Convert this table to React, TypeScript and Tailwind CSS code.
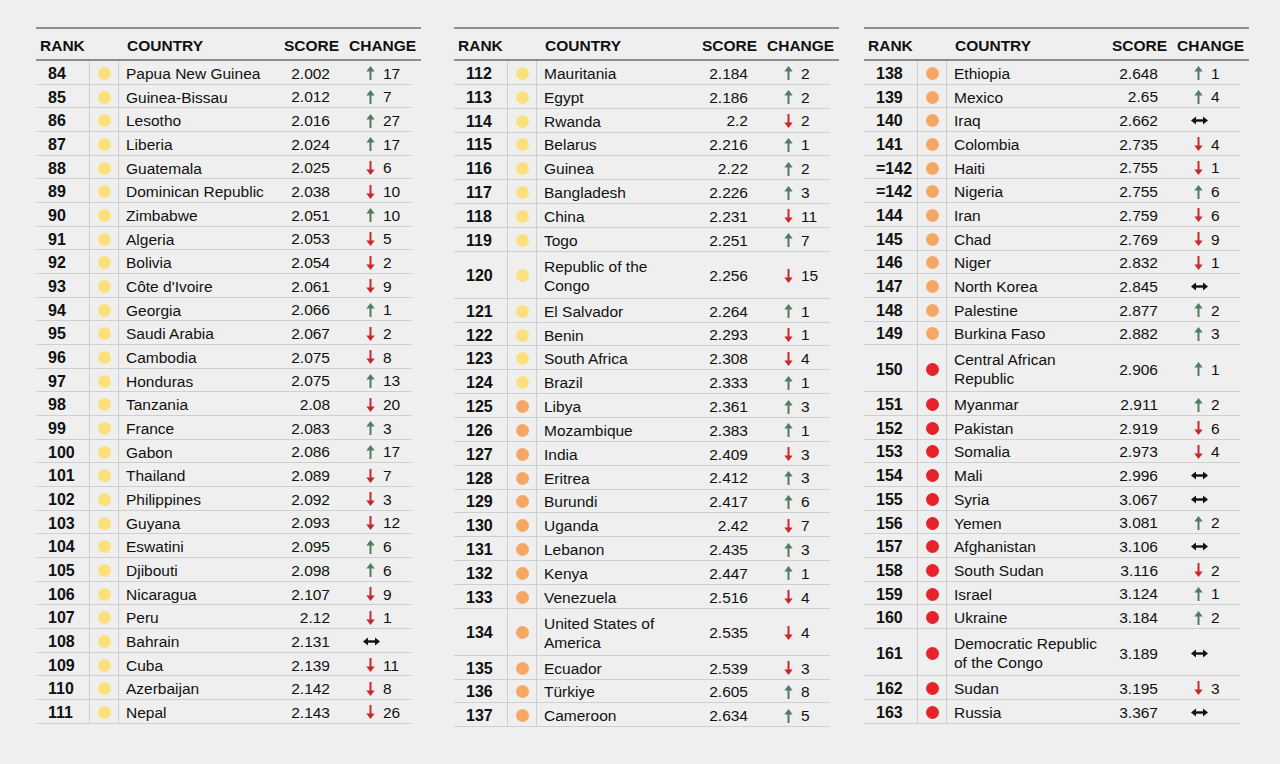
import React from "react";

type Dir = "up" | "down" | "same";
type Row = { r: string; c: string[]; s: string; d: Dir; n?: string; col: "y" | "o" | "r" };

const parse = (txt: string, colFn: (i: number) => "y" | "o" | "r"): Row[] =>
  txt
    .trim()
    .split("\n")
    .map((line, i) => {
      const [r, c, s, d, n] = line.split("|");
      return { r, c: c.split("/"), s, d: d as Dir, n, col: colFn(i) };
    });

const T1 = parse(
  `84|Papua New Guinea|2.002|up|17
85|Guinea-Bissau|2.012|up|7
86|Lesotho|2.016|up|27
87|Liberia|2.024|up|17
88|Guatemala|2.025|down|6
89|Dominican Republic|2.038|down|10
90|Zimbabwe|2.051|up|10
91|Algeria|2.053|down|5
92|Bolivia|2.054|down|2
93|Côte d'Ivoire|2.061|down|9
94|Georgia|2.066|up|1
95|Saudi Arabia|2.067|down|2
96|Cambodia|2.075|down|8
97|Honduras|2.075|up|13
98|Tanzania|2.08|down|20
99|France|2.083|up|3
100|Gabon|2.086|up|17
101|Thailand|2.089|down|7
102|Philippines|2.092|down|3
103|Guyana|2.093|down|12
104|Eswatini|2.095|up|6
105|Djibouti|2.098|up|6
106|Nicaragua|2.107|down|9
107|Peru|2.12|down|1
108|Bahrain|2.131|same|
109|Cuba|2.139|down|11
110|Azerbaijan|2.142|down|8
111|Nepal|2.143|down|26`,
  () => "y"
);

const T2 = parse(
  `112|Mauritania|2.184|up|2
113|Egypt|2.186|up|2
114|Rwanda|2.2|down|2
115|Belarus|2.216|up|1
116|Guinea|2.22|up|2
117|Bangladesh|2.226|up|3
118|China|2.231|down|11
119|Togo|2.251|up|7
120|Republic of the/Congo|2.256|down|15
121|El Salvador|2.264|up|1
122|Benin|2.293|down|1
123|South Africa|2.308|down|4
124|Brazil|2.333|up|1
125|Libya|2.361|up|3
126|Mozambique|2.383|up|1
127|India|2.409|down|3
128|Eritrea|2.412|up|3
129|Burundi|2.417|up|6
130|Uganda|2.42|down|7
131|Lebanon|2.435|up|3
132|Kenya|2.447|up|1
133|Venezuela|2.516|down|4
134|United States of/America|2.535|down|4
135|Ecuador|2.539|down|3
136|Türkiye|2.605|up|8
137|Cameroon|2.634|up|5`,
  (i) => (i < 13 ? "y" : "o")
);

const T3 = parse(
  `138|Ethiopia|2.648|up|1
139|Mexico|2.65|up|4
140|Iraq|2.662|same|
141|Colombia|2.735|down|4
=142|Haiti|2.755|down|1
=142|Nigeria|2.755|up|6
144|Iran|2.759|down|6
145|Chad|2.769|down|9
146|Niger|2.832|down|1
147|North Korea|2.845|same|
148|Palestine|2.877|up|2
149|Burkina Faso|2.882|up|3
150|Central African/Republic|2.906|up|1
151|Myanmar|2.911|up|2
152|Pakistan|2.919|down|6
153|Somalia|2.973|down|4
154|Mali|2.996|same|
155|Syria|3.067|same|
156|Yemen|3.081|up|2
157|Afghanistan|3.106|same|
158|South Sudan|3.116|down|2
159|Israel|3.124|up|1
160|Ukraine|3.184|up|2
161|Democratic Republic/of the Congo|3.189|same|
162|Sudan|3.195|down|3
163|Russia|3.367|same|`,
  (i) => (i < 12 ? "o" : "r")
);

const dotClass = { y: "bg-[#fbe07e]", o: "bg-[#f5a863]", r: "bg-[#e6232a]" };

function Arrow({ d }: { d: Dir }) {
  if (d === "same")
    return (
      <svg width="17" height="9" viewBox="0 0 17 9" className="block">
        <path d="M4 4.5 H13" stroke="#111" strokeWidth="2.4" />
        <path d="M0 4.5 L5 0.5 L5 8.5 Z" fill="#111" />
        <path d="M17 4.5 L12 0.5 L12 8.5 Z" fill="#111" />
      </svg>
    );
  if (d === "up")
    return (
      <svg width="9" height="14" viewBox="0 0 9 14" className="block">
        <path d="M4.5 14 V4" stroke="#4f7d60" strokeWidth="2" />
        <path d="M4.5 0 L8.7 5.6 L0.3 5.6 Z" fill="#4f7d60" />
      </svg>
    );
  return (
    <svg width="9" height="14" viewBox="0 0 9 14" className="block">
      <path d="M4.5 0 V10" stroke="#c8282b" strokeWidth="2" />
      <path d="M4.5 14 L8.7 8.4 L0.3 8.4 Z" fill="#c8282b" />
    </svg>
  );
}

function Table({ rows, h, ml }: { rows: Row[]; h: string; ml: string }) {
  return (
    <div className={`w-[385px] shrink-0 ${ml}`}>
      <div className="flex h-[34px] items-center border-t-2 border-b-2 border-[#8e8e8e] pt-[4px] text-[15.5px] font-bold text-[#111]">
        <div className="w-[91px] pl-[4px]">RANK</div>
        <div className="w-[157px]">COUNTRY</div>
        <div className="w-[65px]">SCORE</div>
        <div>CHANGE</div>
      </div>
      <div className="w-[376px]">
        {rows.map((row, i) => (
          <div
            key={i}
            className={`flex border-b border-[#cfcfcf] ${row.c.length > 1 ? "h-[47px]" : h}`}
          >
            <div className="flex w-[54px] items-center border-r border-[#cdcdcd] pl-[12px] pt-[3px] text-[16px] font-bold text-[#111]">
              {row.r}
            </div>
            <div className="flex w-[29px] items-center justify-center border-r border-[#cdcdcd] pt-[2px]">
              <span className={`block h-[13px] w-[13px] rounded-full ${dotClass[row.col]}`} />
            </div>
            <div className="flex w-[157px] flex-col justify-center pl-[7px] pt-[2px] text-[15.5px] leading-[19px] text-[#111]">
              {row.c.map((l, j) => (
                <span key={j} className="whitespace-nowrap">
                  {l}
                </span>
              ))}
            </div>
            <div className="flex w-[54px] items-center justify-end pt-[2px] text-[15.5px] text-[#111]">{row.s}</div>
            <div className="flex items-center pl-[36px] pt-[2px] text-[15.5px] text-[#111]">
              <div className={row.d === "same" ? "-ml-[3px]" : ""}>
                <Arrow d={row.d} />
              </div>
              {row.n && <span className="ml-[8px]">{row.n}</span>}
            </div>
          </div>
        ))}
      </div>
    </div>
  );
}

export default function App() {
  return (
    <div className="min-h-[764px] w-[1280px] bg-[#efefef] font-['Liberation_Sans',Arial,Helvetica,sans-serif]">
      <div className="flex pl-[36px] pt-[27px]">
        <Table rows={T1} h="h-[23.68px]" ml="" />
        <Table rows={T2} h="h-[23.85px]" ml="ml-[33px]" />
        <Table rows={T3} h="h-[23.7px]" ml="ml-[25px]" />
      </div>
    </div>
  );
}
